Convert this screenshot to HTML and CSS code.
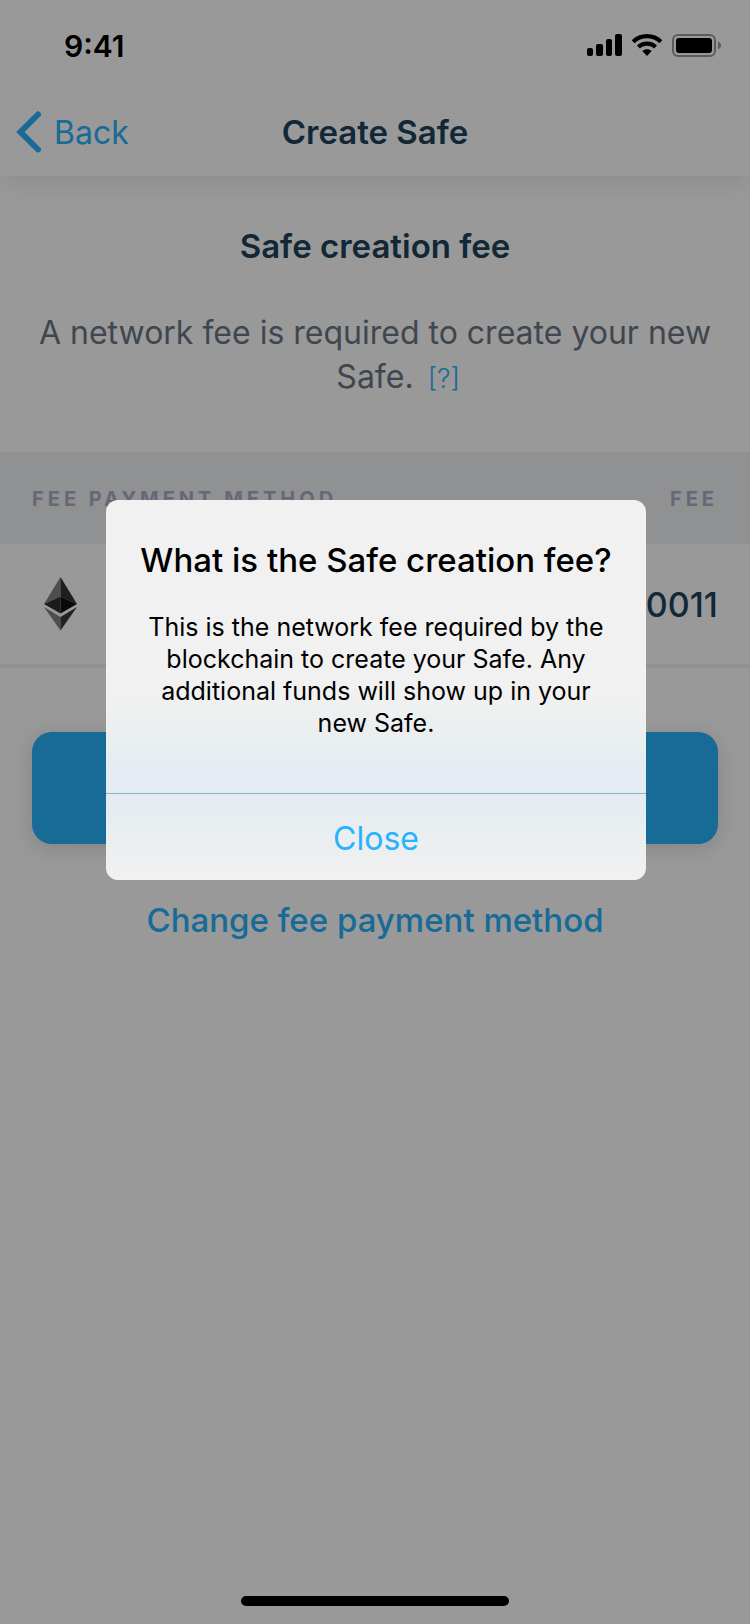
FILE: index.html
```html
<!DOCTYPE html>
<html lang="en">
<head>
<meta charset="utf-8">
<meta name="viewport" content="width=device-width, initial-scale=1">
<title>Create Safe</title>
<link rel="stylesheet" href="styles.css">
</head>
<body>
<div class="screen">
  <header class="topbar">
    <div class="status">
      <time class="clock">9:41</time>
      <div class="indicators">
        <svg width="36" height="24" viewBox="0 0 36 24" aria-hidden="true">
          <rect x="1" y="14" width="6" height="8" rx="2"/>
          <rect x="10" y="10" width="7" height="12" rx="2"/>
          <rect x="20" y="5" width="6" height="17" rx="2"/>
          <rect x="29" y="0" width="7" height="22" rx="2"/>
        </svg>
        <svg width="32" height="24" viewBox="0 0 32 24" aria-hidden="true">
          <path d="M16 0C22 0 27.2 2.200 31.300 6.200L28.400 9.200C25 6 20.700 4.200 16 4.200S7 6 3.600 9.200L.7 6.200C4.800 2.200 10 0 16 0Z"/>
          <path d="M16 7.600C19.900 7.600 23.400 9.100 26 11.600L23.100 14.600C21.200 12.800 18.700 11.800 16 11.800S10.800 12.800 8.900 14.600L6 11.600C8.600 9.100 12.100 7.600 16 7.600Z"/>
          <path d="M16 15.200C17.800 15.200 19.400 15.800 20.700 17L16 22L11.300 17C12.600 15.800 14.200 15.200 16 15.200Z"/>
        </svg>
        <svg width="50" height="24" viewBox="0 0 50 24" aria-hidden="true">
          <rect x="1" y="1" width="42" height="21" rx="5" fill="none" stroke="#000" stroke-opacity=".4" stroke-width="2"/>
          <rect x="4" y="4" width="36" height="15" rx="3"/>
          <path d="M46 7.500C48 8.300 49 9.800 49 11.500S48 14.700 46 15.500Z" fill-opacity=".4"/>
        </svg>
      </div>
    </div>
    <nav class="nav">
      <button class="back" type="button">
        <svg width="26" height="42" viewBox="0 0 26 42" aria-hidden="true"><path d="M22 3.500L4.500 21L22 38.500" fill="none" stroke="currentColor" stroke-width="6" stroke-linecap="round" stroke-linejoin="miter"/></svg>
        Back
      </button>
      <h1 class="title">Create Safe</h1>
    </nav>
  </header>
  <main class="content">
    <h2 class="heading">Safe creation fee</h2>
    <p class="intro">A network fee is required to create your new Safe.<a class="help" href="#fee-info">[?]</a></p>
    <table class="fees">
      <thead>
        <tr><th scope="col">FEE PAYMENT METHOD</th><th scope="col" class="amount">FEE</th></tr>
      </thead>
      <tbody>
        <tr>
          <td>
            <svg class="ether" width="56" height="56" viewBox="0 0 56 56" role="img" aria-label="Ether">
              <path fill="#828282" d="M28.500 1L12 28L28.500 20.500Z"/>
              <path fill="#343434" d="M28.500 1L45 28L28.500 20.500Z"/>
              <path fill="#2f2f2f" d="M28.500 20.500L12 28L28.500 37.500Z"/>
              <path fill="#101010" d="M28.500 20.500L45 28L28.500 37.500Z"/>
              <path fill="#828282" d="M12 31L28.500 41V54.500Z"/>
              <path fill="#393939" d="M45 31L28.500 41V54.500Z"/>
            </svg>
          </td>
          <td class="amount">0.0011</td>
        </tr>
      </tbody>
    </table>
    <div class="actions">
      <button class="primary" type="button" aria-label="Continue"></button>
      <button class="link" type="button">Change fee payment method</button>
    </div>
  </main>
  <div class="home"></div>
</div>
<div class="overlay">
  <section class="dialog" id="fee-info" role="dialog" aria-modal="true" aria-labelledby="fee-title">
    <div class="message">
      <h2 class="dialog-title" id="fee-title">What is the Safe creation fee?</h2>
      <p class="dialog-text">This is the network fee required by the blockchain to create your Safe. Any additional funds will show up in your new Safe.</p>
    </div>
    <button class="close" type="button">Close</button>
  </section>
</div>
</body>
</html>
```
FILE: styles.css
```css
* {
  box-sizing: border-box;
}

body {
  margin: 0;
  background: #fff;
  color: #1e435d;
  font-family: Inter, "Liberation Sans", sans-serif;
}

h1, h2, p {
  margin: 0;
}

button {
  margin: 0;
  padding: 0;
  border: 0;
  background: none;
  color: #28b1fc;
  font: inherit;
  cursor: pointer;
}

.screen {
  display: flex;
  flex-direction: column;
  min-height: 100vh;
}

.topbar {
  box-shadow: 0 8px 24px -4px rgba(40, 64, 84, .14);
}

.status {
  display: flex;
  justify-content: space-between;
  align-items: center;
  height: 88px;
  padding: 4px 28px 0 64px;
  color: #000;
}

.clock {
  font-size: 30px;
  font-weight: 600;
}

.indicators {
  display: flex;
  gap: 9px;
}

.nav {
  display: grid;
  grid-template-columns: 1fr auto 1fr;
  align-items: center;
  height: 88px;
  padding: 0 16px;
}

.back {
  display: flex;
  align-items: center;
  gap: 12px;
  font-size: 32px;
}

.title, .heading {
  font-size: 33px;
  font-weight: 600;
  line-height: 40px;
}

.content {
  flex: 1;
}

.heading {
  padding-top: 50px;
  text-align: center;
}

.intro {
  padding: 45px 32px 53px;
  color: #6b7684;
  font-size: 32px;
  line-height: 44px;
  text-align: center;
}

/* Zero width keeps the last word centred, with the link hanging after it. */
.help {
  display: inline-block;
  width: 0;
  text-indent: 14px;
  white-space: nowrap;
  color: #28b1fc;
  font-size: 27px;
  font-weight: 300;
  line-height: 32px;
  text-align: left;
  text-decoration: none;
}

.fees {
  width: 100%;
  border-collapse: collapse;
}

.fees th {
  height: 92px;
  padding: 2px 32px 0;
  background: #f1f2f5;
  color: #adacc8;
  font-size: 20px;
  font-weight: 700;
  letter-spacing: 4px;
  text-align: left;
}

.fees td {
  height: 122px;
  padding: 0 32px;
  border-bottom: 4px solid #f3f4f5;
  font-size: 34px;
  font-weight: 500;
}

.fees .amount {
  text-align: right;
}

.ether {
  display: block;
}

.actions {
  display: flex;
  flex-direction: column;
  gap: 56px;
  padding: 64px 32px;
}

.primary {
  height: 112px;
  border-radius: 20px;
  background: #28b1fc;
  box-shadow: 0 4px 20px rgba(40, 54, 61, .18);
}

.link {
  align-self: center;
  font-size: 33px;
  font-weight: 500;
  line-height: 40px;
}

.home {
  align-self: center;
  width: 268px;
  height: 10px;
  margin-bottom: 18px;
  border-radius: 5px;
  background: #000;
}

.overlay {
  position: absolute;
  inset: 0;
  display: flex;
  justify-content: center;
  align-items: flex-start;
  padding: 500px 104px 0 106px;
  background: rgba(0, 0, 0, .4);
}

.dialog {
  width: 100%;
  border-radius: 12px;
  background: linear-gradient(#f1f1f1 0 50%, #e8eef0 66%, #e4ebf3 72% 80%, #e8eef0 86%, #f1f1f2);
  color: #000;
  text-align: center;
  overflow: hidden;
}

.message {
  padding: 40px 32px 54px;
}

.dialog-title {
  padding-bottom: 31px;
  font-size: 33px;
  font-weight: 500;
  line-height: 40px;
}

.dialog-text {
  font-size: 25px;
  line-height: 32px;
}

.close {
  width: 100%;
  height: 87px;
  padding-top: 2px;
  border-top: 1px solid #88b1cb;
  color: #28b2ff;
  font-size: 32px;
}
```
